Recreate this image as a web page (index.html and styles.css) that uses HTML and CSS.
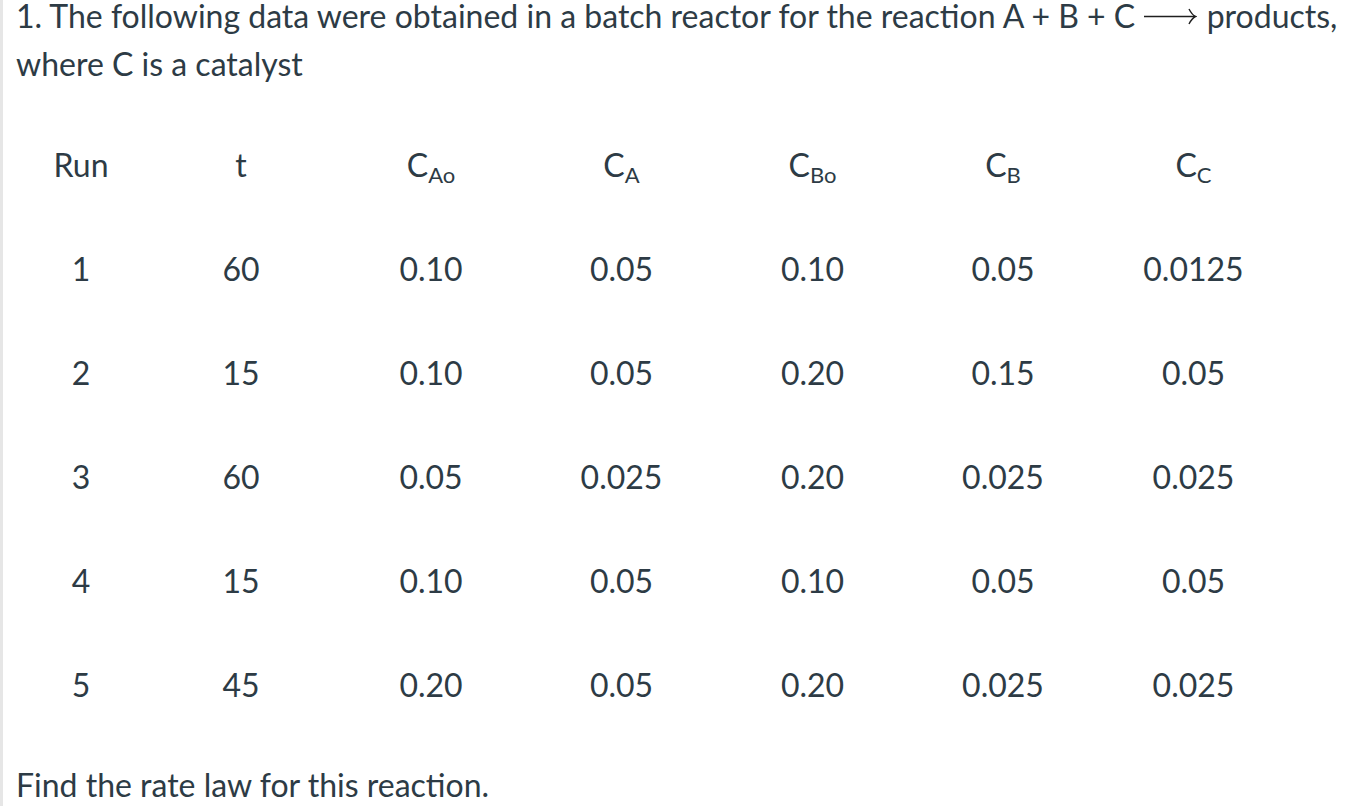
FILE: index.html
```html
<!DOCTYPE html>
<html>
<head>
<meta charset="utf-8">
<link rel="stylesheet" href="styles.css">
</head>
<body>
<div class="page">
  <p class="intro">1. The following data were obtained in a batch reactor for the reaction A + B + C <svg class="arrow" width="54" height="20" viewBox="0 0 54 20"><path d="M1 10.5H52" /><path d="M46 3C48 6.8 50 9.5 52.5 10.5C50 11.5 48 14.2 46 18" /></svg> products, where C is a catalyst</p>
  <div class="table">
    <div class="row head">
      <div class="cell">Run</div>
      <div class="cell">t</div>
      <div class="cell">C<sub>Ao</sub></div>
      <div class="cell">C<sub>A</sub></div>
      <div class="cell">C<sub>Bo</sub></div>
      <div class="cell">C<sub>B</sub></div>
      <div class="cell">C<sub>C</sub></div>
    </div>
    <div class="row">
      <div class="cell">1</div><div class="cell">60</div><div class="cell">0.10</div><div class="cell">0.05</div><div class="cell">0.10</div><div class="cell">0.05</div><div class="cell">0.0125</div>
    </div>
    <div class="row">
      <div class="cell">2</div><div class="cell">15</div><div class="cell">0.10</div><div class="cell">0.05</div><div class="cell">0.20</div><div class="cell">0.15</div><div class="cell">0.05</div>
    </div>
    <div class="row">
      <div class="cell">3</div><div class="cell">60</div><div class="cell">0.05</div><div class="cell">0.025</div><div class="cell">0.20</div><div class="cell">0.025</div><div class="cell">0.025</div>
    </div>
    <div class="row">
      <div class="cell">4</div><div class="cell">15</div><div class="cell">0.10</div><div class="cell">0.05</div><div class="cell">0.10</div><div class="cell">0.05</div><div class="cell">0.05</div>
    </div>
    <div class="row">
      <div class="cell">5</div><div class="cell">45</div><div class="cell">0.20</div><div class="cell">0.05</div><div class="cell">0.20</div><div class="cell">0.025</div><div class="cell">0.025</div>
    </div>
  </div>
  <p class="question">Find the rate law for this reaction.</p>
</div>
</body>
</html>
```
FILE: styles.css
```css
html, body {
  margin: 0;
  padding: 0;
  background: #ffffff;
  overflow: hidden;
}
body {
  font-family: Lato, "Liberation Sans", sans-serif;
  font-size: 32px;
  line-height: 48px;
  color: #2d3b45;
}
.page {
  border-left: 3px solid #e6e6e6;
  padding-left: 13px;
  margin-top: -8px;
  min-height: 830px;
  box-sizing: border-box;
}
.intro {
  margin: 0;
  width: 1330px;
}
.arrow {
  vertical-align: 2px;
  margin: 0 1px 0 0;
  fill: none;
  stroke: #1f1f1f;
  stroke-width: 1.4;
}
.table {
  margin-top: 25px;
  margin-left: 0;
  display: flex;
  flex-direction: column;
}
.row {
  display: grid;
  grid-template-columns: 130px 190px 190px 191px 191px 190px 191px;
  height: 104px;
  align-items: center;
}
.cell {
  text-align: center;
  line-height: 48px;
}
.cell sub {
  font-size: 22px;
  line-height: 0;
  vertical-align: -6px;
}
.question {
  margin: 24px 0 0 0;
}
```
